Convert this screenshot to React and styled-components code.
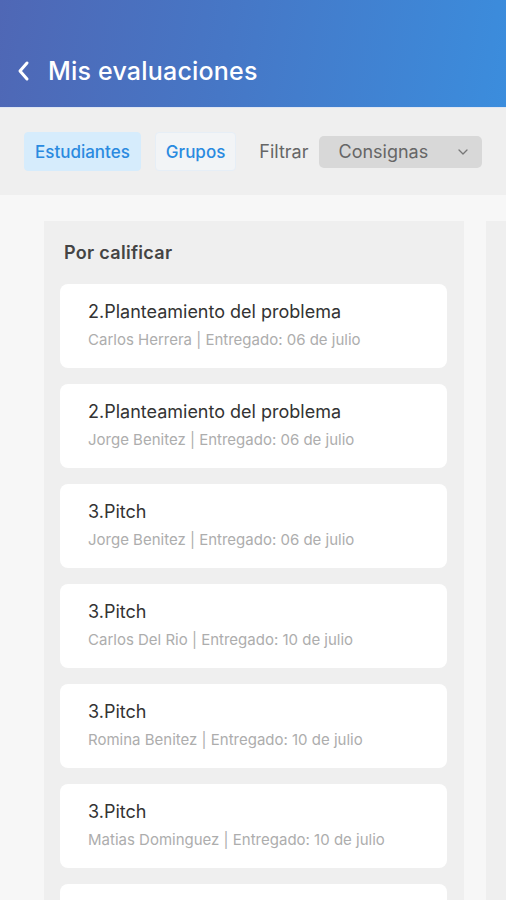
import React from 'react';
import styled, { createGlobalStyle } from 'styled-components';

// Global reset
const GlobalStyle = createGlobalStyle`
  body {
    margin: 0;
    background: #f7f7f7;
    font-family: 'Inter', 'Liberation Sans', sans-serif;
  }
`;

const Page = styled.div`
  width: 506px;
  height: 900px;
  overflow: hidden;
  display: flex;
  flex-direction: column;
  background: #f7f7f7;
`;

const Header = styled.header`
  height: 108px;
  flex-shrink: 0;
  box-sizing: border-box;
  padding: 34px 0 0 16px;
  display: flex;
  align-items: center;
  gap: 18px;
  background: linear-gradient(100deg, #4f67b5 0%, #4677c6 45%, #3b8ddd 100%);
  border-bottom: 1px solid #dfe6f3;
`;

const BackButton = styled.button`
  border: none;
  background: none;
  padding: 0;
  display: flex;
  color: white;
`;

const Title = styled.h1`
  margin: 0;
  font-size: 25px;
  font-weight: 500;
  color: white;
  letter-spacing: 0.2px;
`;

const Toolbar = styled.div`
  height: 87px;
  flex-shrink: 0;
  box-sizing: border-box;
  padding: 0 24px;
  display: flex;
  align-items: center;
  background: #efefef;
`;

const Tab = styled.button`
  height: 39px;
  padding: 0 10px;
  margin-right: ${(p) => p.gap || 0}px;
  border-radius: 4px;
  border: 1px solid ${(p) => (p.active ? '#d6ecfc' : '#e6eef6')};
  background: ${(p) => (p.active ? '#d6ecfc' : '#f2f4f6')};
  color: #2a8ae0;
  font-family: 'Inter', 'Liberation Sans', sans-serif;
  font-size: 17px;
  font-weight: 500;
`;

const FilterLabel = styled.span`
  margin: 0 11px 0 9px;
  font-size: 18px;
  color: #666;
`;

const Select = styled.div`
  width: 163px;
  height: 32px;
  box-sizing: border-box;
  padding: 0 14px 0 19px;
  border-radius: 5px;
  background: #d8d8d8;
  display: flex;
  align-items: center;
  justify-content: space-between;
  color: #666;
  font-size: 18px;
`;

const Board = styled.div`
  flex: 1;
  display: flex;
  gap: 22px;
  padding: 26px 0 0 44px;
  overflow: hidden;
`;

const Column = styled.section`
  width: 420px;
  flex-shrink: 0;
  box-sizing: border-box;
  padding: 21px 17px 0 16px;
  background: #efefef;
  display: flex;
  flex-direction: column;
  gap: 16px;
`;

const ColumnTitle = styled.h2`
  margin: 0 0 4px 4px;
  font-size: 18px;
  font-weight: 600;
  color: #444;
  line-height: 22px;
  letter-spacing: 0.3px;
`;

const Card = styled.div`
  height: 84px;
  flex-shrink: 0;
  box-sizing: border-box;
  padding: 15px 28px 0;
  border-radius: 8px;
  background: white;
`;

const CardTitle = styled.div`
  font-size: 18px;
  color: #333;
  line-height: 26px;
`;

const CardMeta = styled.div`
  margin-top: 5px;
  font-size: 15px;
  color: #adadad;
  line-height: 20px;
`;

const items = [
  ['2.Planteamiento del problema', 'Carlos Herrera', '06 de julio'],
  ['2.Planteamiento del problema', 'Jorge Benitez', '06 de julio'],
  ['3.Pitch', 'Jorge Benitez', '06 de julio'],
  ['3.Pitch', 'Carlos Del Rio', '10 de julio'],
  ['3.Pitch', 'Romina Benitez', '10 de julio'],
  ['3.Pitch', 'Matias Dominguez', '10 de julio'],
  ['3.Pitch', 'Carlos Herrera', '10 de julio'],
];

function App() {
  return (
    <Page>
      <GlobalStyle />
      <Header>
        <BackButton>
          <svg width="14" height="22" viewBox="0 0 14 22" fill="none">
            <path d="M11 3L4 11l7 8" stroke="white" strokeWidth="3" strokeLinecap="round" strokeLinejoin="round" />
          </svg>
        </BackButton>
        <Title>Mis evaluaciones</Title>
      </Header>
      <Toolbar>
        <Tab active gap={14}>Estudiantes</Tab>
        <Tab gap={14}>Grupos</Tab>
        <FilterLabel>Filtrar</FilterLabel>
        <Select>
          Consignas
          <svg width="10" height="6" viewBox="0 0 10 6" fill="none">
            <path d="M1 1l4 4 4-4" stroke="#777" strokeWidth="1.3" strokeLinecap="round" strokeLinejoin="round" />
          </svg>
        </Select>
      </Toolbar>
      <Board>
        <Column>
          <ColumnTitle>Por calificar</ColumnTitle>
          {items.map(([title, name, date], i) => (
            <Card key={i}>
              <CardTitle>{title}</CardTitle>
              <CardMeta>{`${name} | Entregado: ${date}`}</CardMeta>
            </Card>
          ))}
        </Column>
        <Column />
      </Board>
    </Page>
  );
}

export default App;
